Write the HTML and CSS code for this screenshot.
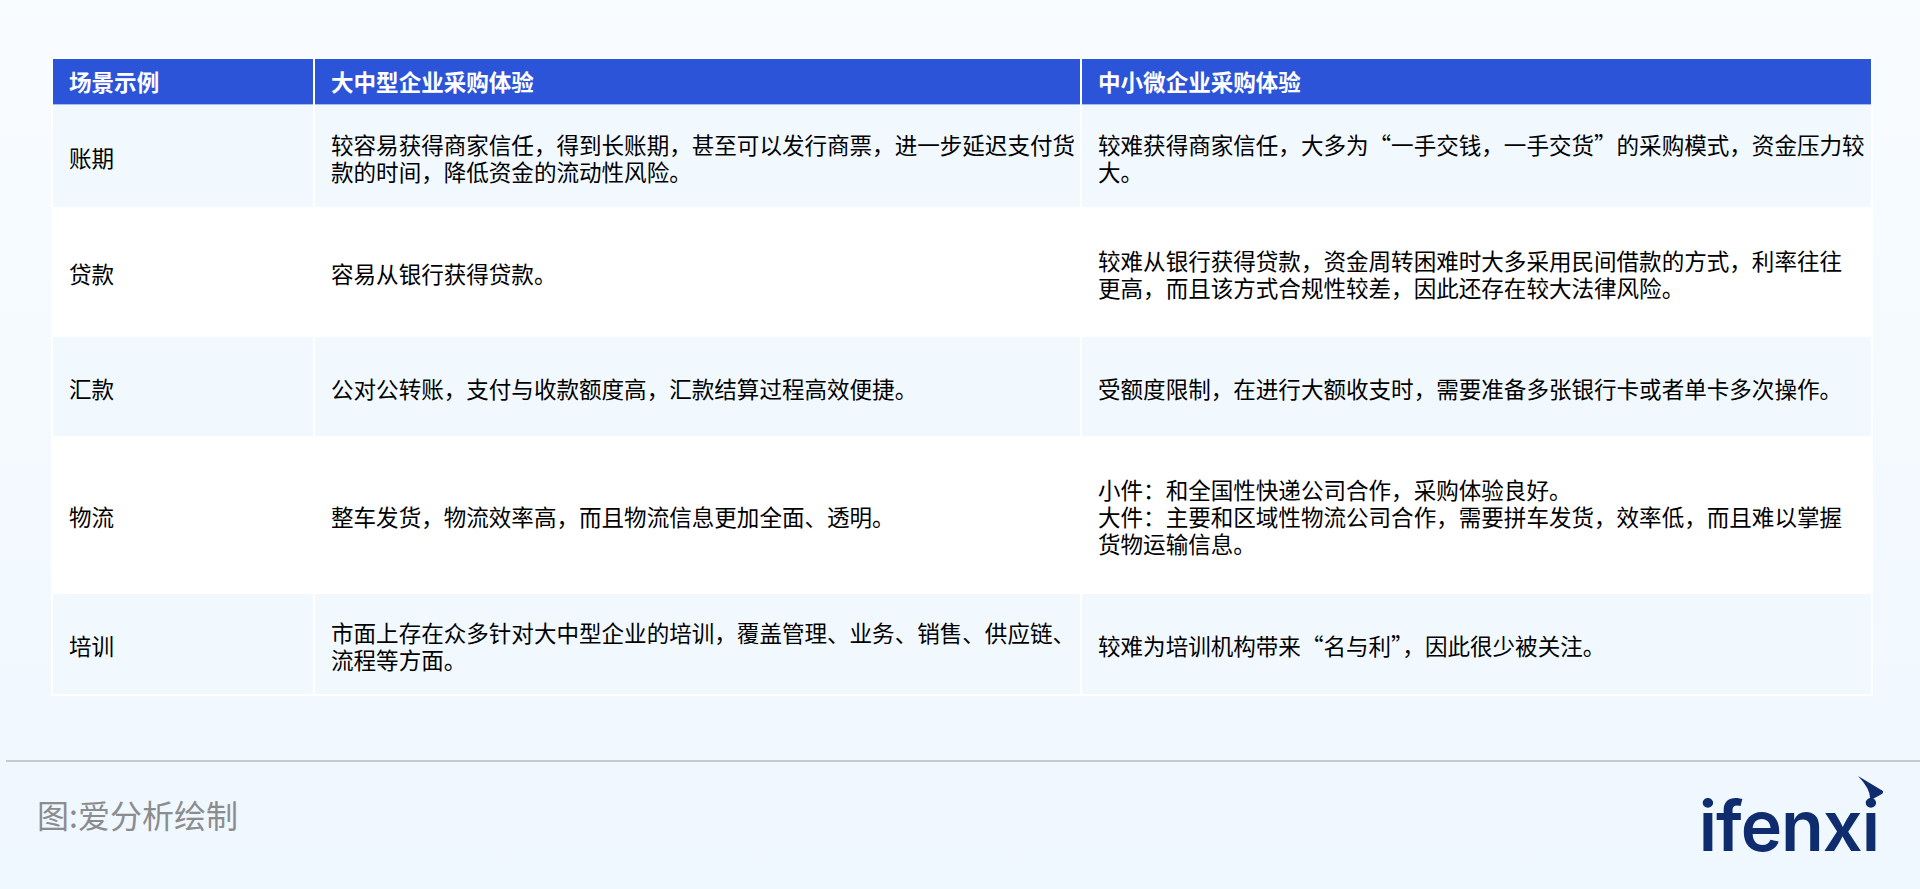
FILE: index.html
```html
<!DOCTYPE html>
<html lang="zh-CN">
<head>
<meta charset="utf-8">
<title>场景示例</title>
<link rel="stylesheet" href="styles.css">
</head>
<body>
<main class="content">
  <table class="compare">
    <colgroup>
      <col class="col-a"><col class="col-b"><col class="col-c">
    </colgroup>
    <thead>
      <tr class="head-row"><th>场景示例</th><th>大中型企业采购体验</th><th>中小微企业采购体验</th></tr>
    </thead>
    <tbody>
      <tr class="row-1 tint"><td>账期</td><td>较容易获得商家信任，得到长账期，甚至可以发行商票，进一步延迟支付货款的时间，降低资金的流动性风险。</td><td>较难获得商家信任，大多为“一手交钱，一手交货”的采购模式，资金压力较大。</td></tr>
      <tr class="row-2"><td>贷款</td><td>容易从银行获得贷款。</td><td>较难从银行获得贷款，资金周转困难时大多采用民间借款的方式，利率往往<br>更高，而且该方式合规性较差，因此还存在较大法律风险。</td></tr>
      <tr class="row-3 tint"><td>汇款</td><td>公对公转账，支付与收款额度高，汇款结算过程高效便捷。</td><td>受额度限制，在进行大额收支时，需要准备多张银行卡或者单卡多次操作。</td></tr>
      <tr class="row-4"><td>物流</td><td>整车发货，物流效率高，而且物流信息更加全面、透明。</td><td>小件：和全国性快递公司合作，采购体验良好。<br>大件：主要和区域性物流公司合作，需要拼车发货，效率低，而且难以掌握<br>货物运输信息。</td></tr>
      <tr class="row-5 tint"><td>培训</td><td>市面上存在众多针对大中型企业的培训，覆盖管理、业务、销售、供应链、流程等方面。</td><td>较难为培训机构带来“名与利”，因此很少被关注。</td></tr>
    </tbody>
  </table>
</main>
<footer class="foot">
  <span class="source">图:爱分析绘制</span>
  <div class="logo">
    <span class="logo-word">ifenxi</span>
    <svg class="logo-arrow" viewBox="0 0 26 34" aria-hidden="true"><path d="M1 0 L26 15 Q26.500 17.500 24 18.500 L13 24.500 Q14.500 14 1 0 Z"/></svg>
  </div>
</footer>
</body>
</html>
```
FILE: styles.css
```css
* { box-sizing: border-box; }
html, body { margin: 0; height: 889px; overflow: hidden; }
body {
  background: linear-gradient(180deg, #f8fcff 0%, #eff7ff 100%);
  font-family: "Noto Sans CJK SC", "Liberation Sans", sans-serif;
  color: #000;
}
.content { padding: 57px 47px 0 51px; height: 760px; }
.compare {
  table-layout: fixed;
  width: 1822px;
  border-collapse: separate;
  border-spacing: 2px 0;
  background: #fff;
  padding: 2px 0;
  font-size: 22.56px;
  line-height: 27px;
}
.col-a { width: 260px; }
.col-b { width: 765px; }
.col-c { width: 789px; }
th, td { padding: 0 0 0 16px; text-align: left; vertical-align: middle; }
th { background: #2b54d8; color: #fff; font-weight: 700; border-bottom: 1px solid #a8bcee; }
td { padding-top: 3px; padding-right: 3px; }
.head-row { height: 46px; }
.row-1 { height: 102px; }
.row-2 { height: 130px; }
.row-3 { height: 99px; }
.row-4 { height: 158px; }
.row-5 { height: 100px; }
.tint td { background: #f2f9fe; }
.foot {
  margin-left: 6px;
  border-top: 2px solid #c5cacd;
  display: flex;
  justify-content: space-between;
  align-items: flex-start;
  height: 127px;
  padding: 29px 41px 0 31px;
}
.source { font-size: 32px; line-height: 46px; color: #8b8c8e; }
.logo { position: relative; }
.logo-word {
  display: block;
  font-family: "Inter", sans-serif;
  font-weight: 600;
  font-size: 70px;
  line-height: 70px;
  color: #0f2d6e;
  letter-spacing: -1px;
}
.logo-arrow { position: absolute; right: -4px; top: -15px; width: 26px; height: 34px; fill: #0f2d6e; }
```
